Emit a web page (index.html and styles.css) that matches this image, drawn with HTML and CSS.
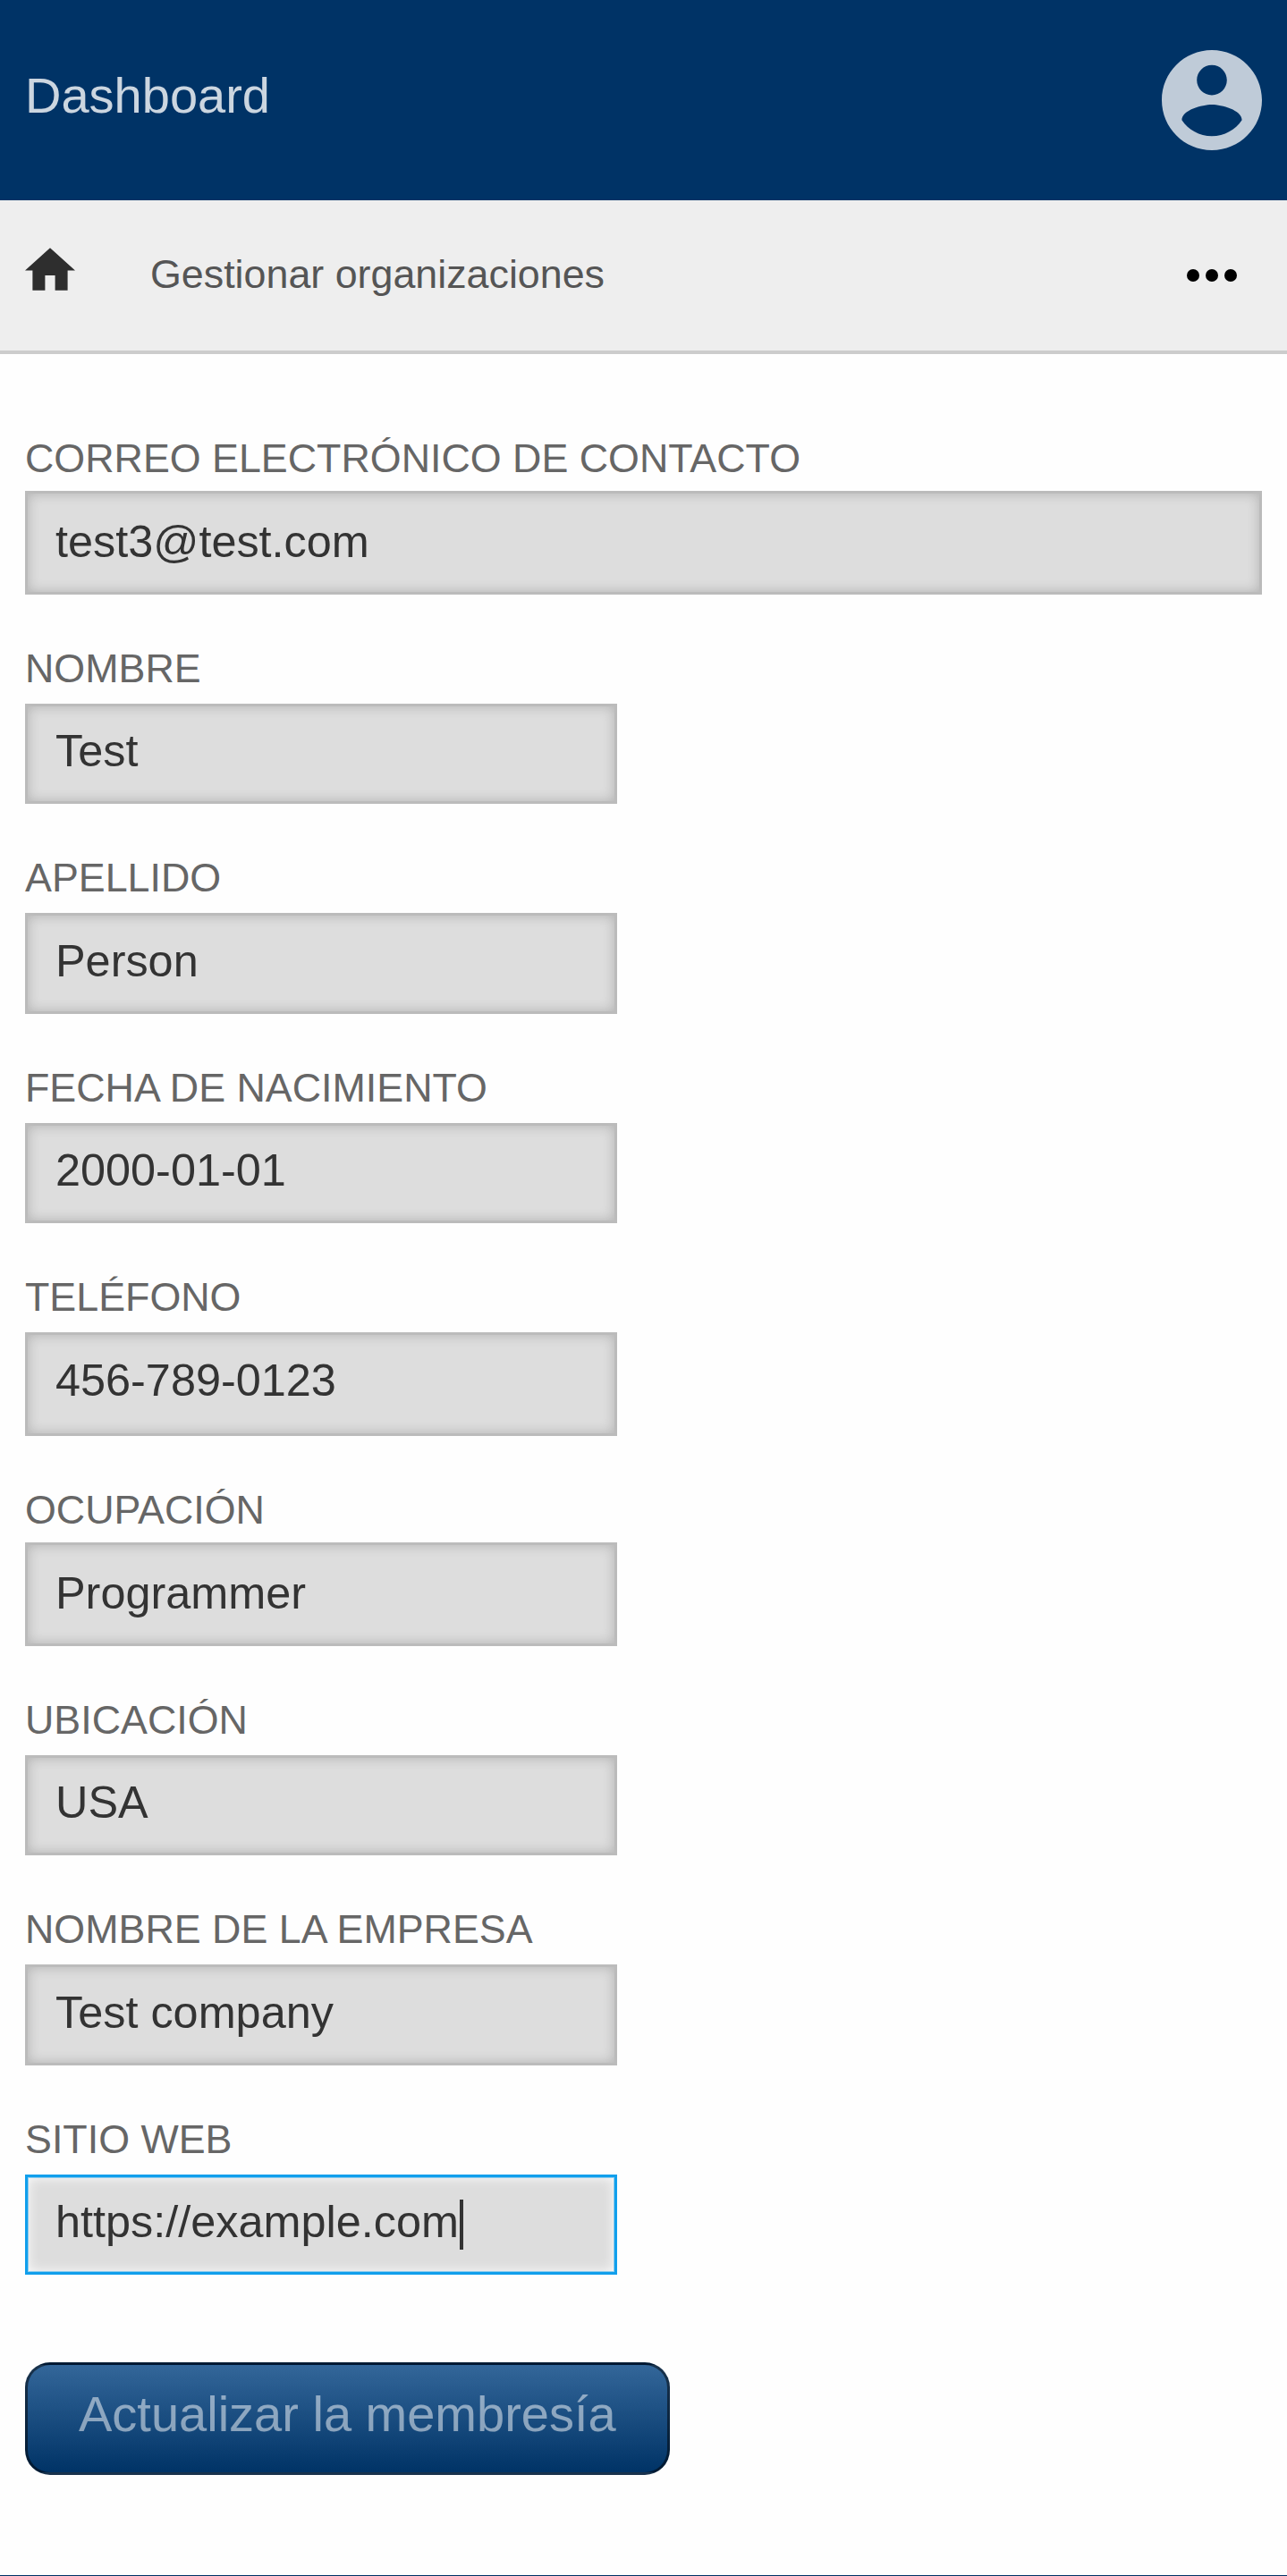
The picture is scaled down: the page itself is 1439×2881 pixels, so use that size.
FILE: index.html
```html
<!DOCTYPE html>
<html lang="es">
<head>
<meta charset="utf-8">
<title>Dashboard</title>
<link rel="stylesheet" href="styles.css">
</head>
<body>
<header class="topbar">
  <span class="topbar-title">Dashboard</span>
  <svg class="avatar" viewBox="2 2 20 20" aria-hidden="true"><path d="M12 2C6.48 2 2 6.48 2 12s4.48 10 10 10 10-4.48 10-10S17.52 2 12 2zm0 3c1.66 0 3 1.34 3 3s-1.34 3-3 3-3-1.34-3-3 1.34-3 3-3zm0 14.2c-2.5 0-4.71-1.28-6-3.22.03-1.99 4-3.08 6-3.08 1.99 0 5.97 1.09 6 3.08-1.29 1.94-3.5 3.22-6 3.22z"/></svg>
</header>
<nav class="navbar">
  <svg class="home" viewBox="2 3 20 17" aria-hidden="true"><path d="M10 20v-6h4v6h5v-8h3L12 3 2 12h3v8z"/></svg>
  <span class="navbar-link">Gestionar organizaciones</span>
  <svg class="more" viewBox="0 0 56 14" aria-hidden="true"><circle cx="7" cy="7" r="7"/><circle cx="28" cy="7" r="7"/><circle cx="49" cy="7" r="7"/></svg>
</nav>
<form class="form">
  <div class="field field-low">
    <label class="label" for="email">CORREO ELECTRÓNICO DE CONTACTO</label>
    <input class="input input-wide" id="email" value="test3@test.com">
  </div>
  <div class="field">
    <label class="label" for="first">NOMBRE</label>
    <input class="input" id="first" value="Test">
  </div>
  <div class="field field-mid">
    <label class="label" for="last">APELLIDO</label>
    <input class="input" id="last" value="Person">
  </div>
  <div class="field">
    <label class="label" for="birth">FECHA DE NACIMIENTO</label>
    <input class="input" id="birth" value="2000-01-01">
  </div>
  <div class="field field-tall">
    <label class="label" for="phone">TELÉFONO</label>
    <input class="input" id="phone" value="456-789-0123">
  </div>
  <div class="field field-low">
    <label class="label" for="job">OCUPACIÓN</label>
    <input class="input" id="job" value="Programmer">
  </div>
  <div class="field">
    <label class="label" for="place">UBICACIÓN</label>
    <input class="input" id="place" value="USA">
  </div>
  <div class="field field-mid">
    <label class="label" for="company">NOMBRE DE LA EMPRESA</label>
    <input class="input" id="company" value="Test company">
  </div>
  <div class="field">
    <label class="label" for="site">SITIO WEB</label>
    <input class="input input-active" id="site" value="https://example.com">
    <span class="caret"></span>
  </div>
  <button class="submit" type="button">Actualizar la membresía</button>
</form>
<footer class="footer"></footer>
</body>
</html>
```
FILE: styles.css
```css
* { box-sizing: border-box; }

body {
  margin: 0;
  background: #fefefe;
  font-family: "Liberation Sans", Arial, sans-serif;
}

.topbar {
  display: flex;
  align-items: center;
  justify-content: space-between;
  height: 224px;
  padding: 0 28px;
  background: #003366;
}

.topbar-title {
  padding-bottom: 11px;
  color: rgba(255, 255, 255, 0.8);
  font-size: 56px;
  line-height: 63px;
}

.avatar {
  width: 112px;
  height: 112px;
  fill: rgba(255, 255, 255, 0.75);
}

.navbar {
  display: flex;
  align-items: flex-start;
  height: 172px;
  padding: 53px 56px 0 28px;
  background: #eee;
  border-bottom: 4px solid #ccc;
}

.home {
  width: 56px;
  height: 48px;
  fill: #2e2e2e;
}

.navbar-link {
  margin: 4px auto 0 84px;
  color: #555;
  font-size: 44.8px;
  line-height: 51px;
}

.more {
  width: 56px;
  height: 14px;
  margin-top: 24px;
}

.form {
  display: flex;
  flex-direction: column;
  align-items: flex-start;
  gap: 57px;
  padding: 91px 28px 112px;
}

.field {
  --label-gap: 14px;
  --pad-top: 21px;
  --pad-bottom: 28px;
  position: relative;
  display: flex;
  flex-direction: column;
  gap: var(--label-gap);
  width: 100%;
}

.field-low {
  --label-gap: 11px;
  --pad-top: 25px;
}

.field-mid { --pad-top: 22px; }

.field-tall {
  --pad-top: 22px;
  --pad-bottom: 31px;
}

.label {
  color: #666;
  font-size: 44.8px;
  line-height: 51px;
}

.input {
  width: 662px;
  height: calc(63px + var(--pad-top) + var(--pad-bottom));
  margin: 0;
  padding: var(--pad-top) 31px var(--pad-bottom);
  border: 3px solid #bbb;
  border-radius: 0;
  outline: 0;
  background: #ddd;
  box-shadow: inset 0 0 14px rgba(0, 0, 0, 0.2);
  color: #333;
  font-family: inherit;
  font-size: 50.4px;
  line-height: 57px;
}

.input-wide { width: 100%; }

.input-active {
  border-color: #119fec;
  box-shadow: inset 0 0 0 1px rgba(17, 159, 236, 0.45), inset 0 0 14px #fff;
}

.caret {
  position: absolute;
  left: 486px;
  bottom: 28px;
  width: 4px;
  height: 56px;
  background: #333;
}

.submit {
  height: 126px;
  margin-top: 41px;
  padding: 23px 57px 34px;
  border: 3px solid rgba(0, 0, 0, 0.5);
  border-radius: 28px;
  background: linear-gradient(#336699, #003366);
  color: rgba(255, 255, 255, 0.5);
  font-family: inherit;
  font-size: 56px;
  line-height: 63px;
}

.footer {
  height: 1px;
  background: #003366;
}
```
